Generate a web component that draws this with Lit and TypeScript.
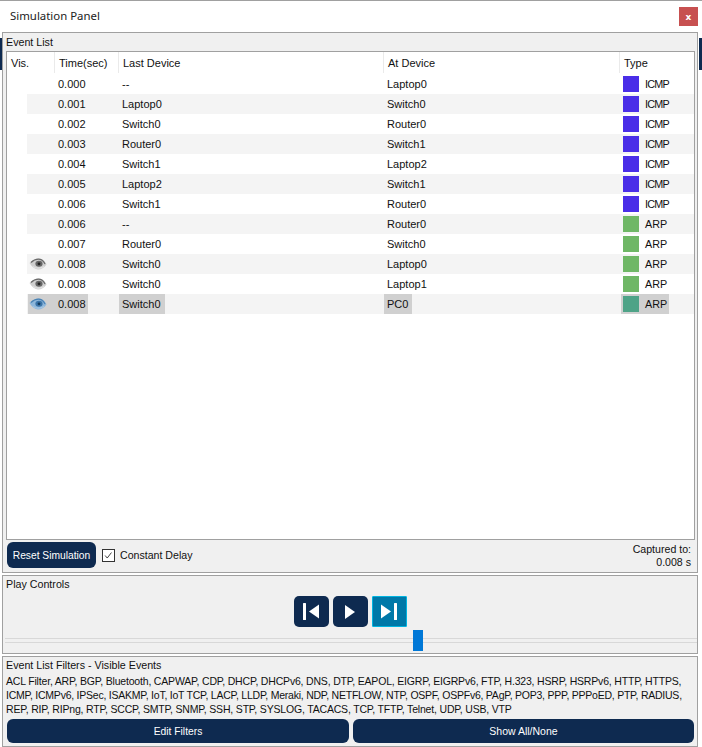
import { LitElement, html, css, svg } from "lit";
import { customElement } from "lit/decorators.js";

type Row = { t: string; last: string; at: string; type: string; eye?: boolean; sel?: boolean };

const rows: Row[] = [
  { t: "0.000", last: "--", at: "Laptop0", type: "ICMP" },
  { t: "0.001", last: "Laptop0", at: "Switch0", type: "ICMP" },
  { t: "0.002", last: "Switch0", at: "Router0", type: "ICMP" },
  { t: "0.003", last: "Router0", at: "Switch1", type: "ICMP" },
  { t: "0.004", last: "Switch1", at: "Laptop2", type: "ICMP" },
  { t: "0.005", last: "Laptop2", at: "Switch1", type: "ICMP" },
  { t: "0.006", last: "Switch1", at: "Router0", type: "ICMP" },
  { t: "0.006", last: "--", at: "Router0", type: "ARP" },
  { t: "0.007", last: "Router0", at: "Switch0", type: "ARP" },
  { t: "0.008", last: "Switch0", at: "Laptop0", type: "ARP", eye: true },
  { t: "0.008", last: "Switch0", at: "Laptop1", type: "ARP", eye: true },
  { t: "0.008", last: "Switch0", at: "PC0", type: "ARP", eye: true, sel: true },
];

const filters = [
  { text: "ACL Filter, ARP, BGP, Bluetooth, CAPWAP, CDP, DHCP, DHCPv6, DNS, DTP, EAPOL, EIGRP, EIGRPv6, FTP, H.323, HSRP, HSRPv6, HTTP, HTTPS,", track: -0.183 },
  { text: "ICMP, ICMPv6, IPSec, ISAKMP, IoT, IoT TCP, LACP, LLDP, Meraki, NDP, NETFLOW, NTP, OSPF, OSPFv6, PAgP, POP3, PPP, PPPoED, PTP, RADIUS,", track: -0.235 },
  { text: "REP, RIP, RIPng, RTP, SCCP, SMTP, SNMP, SSH, STP, SYSLOG, TACACS, TCP, TFTP, Telnet, UDP, USB, VTP", track: -0.18 },
];

const eye = (sel: boolean) => svg`<svg class="eye" width="18" height="12" viewBox="0 0 18 12">
  <path d="M0.500 5 C4 1.500 7 0.500 10 0.500 C13 0.500 16 3 17.500 6.500 C15 10 12.500 11.500 9 11.500 C6 11.500 3 9 0.500 5 Z" fill="${sel ? "#8db6da" : "#cfcfcf"}"/>
  <path d="M2 4.500 C5 1.500 8 0.800 11 1.300 C13.500 1.800 15 3.500 16 6" fill="none" stroke="${sel ? "#4a82b4" : "#6a6a6a"}" stroke-width="1.200"/>
  <ellipse cx="10" cy="5.800" rx="3.600" ry="3" fill="${sel ? "#3a74a8" : "#666"}"/>
  <circle cx="10" cy="5.800" r="1.400" fill="${sel ? "#12395c" : "#222"}"/>
  <path d="M4 8.500 C7 10.500 11 10.800 15 8.500" fill="none" stroke="${sel ? "#a9c9e6" : "#e6e6e6"}" stroke-width="1"/>
</svg>`;

@customElement("app-root")
export class AppRoot extends LitElement {
  static styles = css`
    :host {
      display: block;
      position: relative;
      width: 702px;
      height: 747px;
      box-sizing: border-box;
      overflow: hidden;
      background: #fff;
      font-family: "Liberation Sans", Arial, sans-serif;
      font-size: 10.500px;
      color: #111;
      border-top: 1px solid #a0a0a0;
    }
    .sliver {
      position: absolute;
      top: 37px;
      height: 32px;
      background: #0e2a50;
    }
    .sliver.l { left: 0; width: 2px; }
    .sliver.r { right: 0; width: 3px; }
    .titlebar {
      height: 31px;
      display: flex;
      align-items: center;
      justify-content: space-between;
      padding: 0 4px 0 10px;
      box-sizing: border-box;
      font-family: "Noto Sans", "Open Sans", sans-serif;
      font-size: 11.400px;
      color: #222;
    }
    .title { position: relative; top: -1px; }
    .close {
      width: 19px;
      height: 19px;
      background: #c75050;
      color: #fff;
      font-family: "DejaVu Sans", sans-serif;
      font-size: 9px;
      font-weight: 700;
      display: flex;
      align-items: center;
      justify-content: center;
    }
    .body {
      padding: 0 4px 0 2px;
      display: flex;
      flex-direction: column;
      gap: 2px;
    }
    .group {
      border: 1px solid #a0a0a0;
      background: #f0f0f0;
      box-sizing: border-box;
    }
    .label { padding-left: 3px; line-height: 13px; font-size: 10.700px; }
    .events {
      height: 541px;
      padding-top: 3px;
      display: flex;
      flex-direction: column;
    }
    .table {
      margin: 2px 0 0 3px;
      width: 689px;
      height: 489px;
      box-sizing: border-box;
      border: 1px solid #a0a0a0;
      background: #fff;
      font-size: 11px;
    }
    .row {
      display: grid;
      grid-template-columns: 48px 64px 265px 236px 73px;
      height: 20px;
      align-items: stretch;
    }
    .head { height: 22px; }
    .head span {
      padding-left: 4px;
      line-height: 23px;
      border-right: 1px solid #eaeaea;
      height: 21px;
    }
    .head span:last-child { border-right: none; }
    .cell { padding-left: 3px; display: flex; align-items: center; }
    .cell > b {
      font-weight: 400;
      display: flex;
      align-items: center;
      height: 20px;
      margin-left: -3px;
      padding: 0 4px 0 3px;
    }
    .visc { padding-left: 21px; }
    .striped { background: linear-gradient(to right, #fff 20px, #f4f4f4 20px); }
    .visinner {
      display: flex;
      align-items: center;
      height: 20px;
      width: 60px;
      flex: none;
      padding-left: 1px;
      box-sizing: border-box;
    }
    .eye { filter: blur(0.600px); }
    .sel { background: #d0d0d0; }
    .swatch {
      width: 16px;
      height: 16px;
      flex: none;
      margin-right: 6px;
    }
    .typec { padding-left: 1px; }
    .typec > b { margin-left: 0; padding: 0 0 0 2px; width: 48px; box-sizing: border-box; font-size: 10.800px; }
    .typec > b.icmp { letter-spacing: -0.800px; }
    .foot {
      display: flex;
      align-items: flex-start;
      padding: 2px 6px 0 4px;
    }
    .btn {
      background: #0e2a50;
      color: #fff;
      border-radius: 6px;
      display: flex;
      align-items: center;
      justify-content: center;
    }
    .reset { width: 89px; height: 26px; font-size: 10.250px; }
    .check {
      display: flex;
      align-items: center;
      height: 26px;
      margin-left: 6px;
      gap: 5px;
      font-size: 10.600px;
    }
    .box {
      width: 13px;
      height: 13px;
      box-sizing: border-box;
      border: 1px solid #333;
      background: #fff;
      display: block;
    }
    .captured {
      margin-left: auto;
      text-align: right;
      line-height: 13px;
      padding-top: 1px;
      font-size: 10.600px;
    }
    .play {
      height: 79px;
      padding-top: 2px;
    }
    .controls {
      display: flex;
      justify-content: center;
      gap: 4px;
      margin-top: 5px;
    }
    .pbtn { width: 35px; height: 31px; border-radius: 5px; }
    .pbtn.on {
      background: #0078a8;
      border: 1px solid #00b4e0;
      border-radius: 1px;
      box-sizing: border-box;
    }
    .slider {
      position: relative;
      height: 24px;
      margin: 3px 0 0 2px;
    }
    .track {
      position: absolute;
      left: 0;
      right: 0;
      top: 8px;
      height: 5px;
      box-sizing: border-box;
      border-top: 1px solid #d8d8d8;
      border-bottom: 1px solid #d8d8d8;
    }
    .thumb {
      position: absolute;
      left: 408px;
      top: 0;
      width: 10px;
      height: 21px;
      background: #0078d7;
    }
    .filters { height: 91px; padding-top: 2px; }
    .ftext {
      padding: 2px 0 0 3px;
      line-height: 14px;
      white-space: nowrap;
    }
    .fbtns {
      display: grid;
      grid-template-columns: 342px 341px;
      gap: 4px;
      padding: 3px 0 0 4px;
    }
    .fbtns .btn { height: 24px; }
    .edit { font-size: 10.300px; }
  `;

  private renderRow(r: Row, i: number) {
    const color = r.type === "ICMP" ? "#4a2ee8" : r.sel ? "#4ea387" : "#6fb766";
    return html`<div class="row ${i % 2 ? "striped" : ""}">
      <div class="cell visc">
        <div class="visinner ${r.sel ? "sel" : ""}">${r.eye ? eye(!!r.sel) : ""}</div>
      </div>
      <div class="cell">${r.t}</div>
      <div class="cell"><b class="${r.sel ? "sel" : ""}">${r.last}</b></div>
      <div class="cell"><b class="${r.sel ? "sel" : ""}">${r.at}</b></div>
      <div class="cell typec">
        <b class="${r.sel ? "sel" : ""} ${r.type === "ICMP" ? "icmp" : ""}">
          <span class="swatch" style="background:${color}"></span>${r.type}
        </b>
      </div>
    </div>`;
  }

  render() {
    return html`
      <div class="titlebar">
        <span class="title">Simulation Panel</span>
        <span class="close">x</span>
      </div>
      <div class="body">
        <section class="group events">
          <div class="label">Event List</div>
          <div class="table">
            <div class="row head">
              <span>Vis.</span><span>Time(sec)</span><span>Last Device</span><span>At Device</span><span>Type</span>
            </div>
            ${rows.map((r, i) => this.renderRow(r, i))}
          </div>
          <div class="foot">
            <div class="btn reset">Reset Simulation</div>
            <div class="check">
              <svg class="box" viewBox="0 0 13 13"><path d="M2.500 6.500 L5 9.500 L10 3" fill="none" stroke="#333" stroke-width="1.100"/></svg>
              <span>Constant Delay</span>
            </div>
            <div class="captured">Captured to:<br />0.008 s</div>
          </div>
        </section>
        <section class="group play">
          <div class="label">Play Controls</div>
          <div class="controls">
            <div class="btn pbtn">
              <svg width="16" height="17" viewBox="0 0 16 17" fill="#fff"><rect x="0" y="0" width="3" height="17" rx="0.500"/><path d="M16 1.500 V15.500 L6 8.500 Z"/></svg>
            </div>
            <div class="btn pbtn">
              <svg width="10" height="14" viewBox="0 0 10 14" fill="#fff"><path d="M0 0 V14 L10 7 Z"/></svg>
            </div>
            <div class="btn pbtn on">
              <svg width="16" height="17" viewBox="0 0 16 17" fill="#fff"><path d="M0 1.500 V15.500 L10 8.500 Z"/><rect x="13" y="0" width="3" height="17" rx="0.500"/></svg>
            </div>
          </div>
          <div class="slider"><div class="track"></div><div class="thumb"></div></div>
        </section>
        <section class="group filters">
          <div class="label">Event List Filters - Visible Events</div>
          <div class="ftext">${filters.map((f) => html`<div style="letter-spacing:${f.track}px">${f.text}</div>`)}</div>
          <div class="fbtns">
            <div class="btn edit">Edit Filters</div>
            <div class="btn">Show All/None</div>
          </div>
        </section>
      </div>
      <div class="sliver l"></div>
      <div class="sliver r"></div>
    `;
  }
}
